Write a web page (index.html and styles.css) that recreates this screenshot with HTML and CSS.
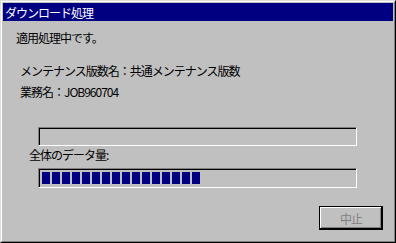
FILE: index.html
```html
<!DOCTYPE html>
<html lang="ja">
<head>
    <meta charset="UTF-8">
    <title>ダウンロード処理</title>
    <link rel="stylesheet" href="styles.css">
</head>
<body>
    <div class="window">
        <div class="frame">
            <div class="titlebar">ダウンロード処理</div>
            <div class="content">
                <p class="message">適用処理中です。</p>
                <div class="info">
                    <p>メンテナンス版数名：共通メンテナンス版数</p>
                    <p>業務名：JOB960704</p>
                </div>
                <div class="bar file-bar"></div>
                <p class="bar-label">全体のデータ量:</p>
                <div class="bar total-bar">
                    <span class="block"></span><span class="block"></span><span class="block"></span><span class="block"></span>
                    <span class="block"></span><span class="block"></span><span class="block"></span><span class="block"></span>
                    <span class="block"></span><span class="block"></span><span class="block"></span><span class="block"></span>
                    <span class="block"></span><span class="block"></span><span class="block"></span><span class="block"></span>
                </div>
                <div class="buttons">
                    <button class="cancel" disabled>中止</button>
                </div>
            </div>
        </div>
    </div>
</body>
</html>
```

FILE: styles.css
```css
body {
    margin: 0;
    background: #c0c0c0;
    font-family: "Noto Sans CJK JP", "Noto Sans", sans-serif;
    font-size: 12px;
    letter-spacing: -1px;
    color: #000;
}

p {
    margin: 0;
}

.window {
    width: 396px;
    height: 243px;
    box-sizing: border-box;
    border: 1px solid;
    border-color: #dfdfdf #000 #000 #dfdfdf;
    background: #c0c0c0;
}

.frame {
    height: 100%;
    box-sizing: border-box;
    border: 1px solid;
    border-color: #fff #808080 #808080 #fff;
    padding: 1px;
}

.titlebar {
    height: 18px;
    line-height: 19px;
    background: #000080;
    color: #fff;
    padding-left: 2px;
    font-size: 12px;
}

.content {
    display: flex;
    flex-direction: column;
    align-items: flex-start;
}

.message {
    line-height: 16px;
    margin: 9px 0 0 13px;
}

.info {
    display: flex;
    flex-direction: column;
    gap: 5px;
    margin: 17px 0 0 17px;
}

.info p {
    line-height: 16px;
}

.bar {
    width: 319px;
    height: 19px;
    box-sizing: border-box;
    margin-left: 35px;
    border: 1px solid;
    border-color: #808080 #fff #fff #808080;
    box-shadow: inset 1px 1px #000, inset -1px -1px #c0c0c0;
}

.file-bar {
    margin-top: 27px;
}

.bar-label {
    line-height: 16px;
    margin: 1px 0 0 26px;
}

.total-bar {
    margin-top: 5px;
    height: 20px;
    display: flex;
    gap: 2px;
    padding: 3px 0 0 3px;
}

.block {
    width: 8px;
    height: 12px;
    background: #000080;
}

.buttons {
    align-self: stretch;
    display: flex;
    justify-content: flex-end;
    padding-right: 10px;
    margin-top: 18px;
}

.cancel {
    width: 64px;
    height: 24px;
    box-sizing: border-box;
    background: #c0c0c0;
    border: 1px solid #000;
    box-shadow: inset -1px -1px #000, inset 1px 1px #fff, inset -2px -2px #808080;
    font-family: "Noto Sans CJK JP", sans-serif;
    font-size: 12px;
    letter-spacing: -1px;
    color: #808080;
    padding: 0;
}
```
